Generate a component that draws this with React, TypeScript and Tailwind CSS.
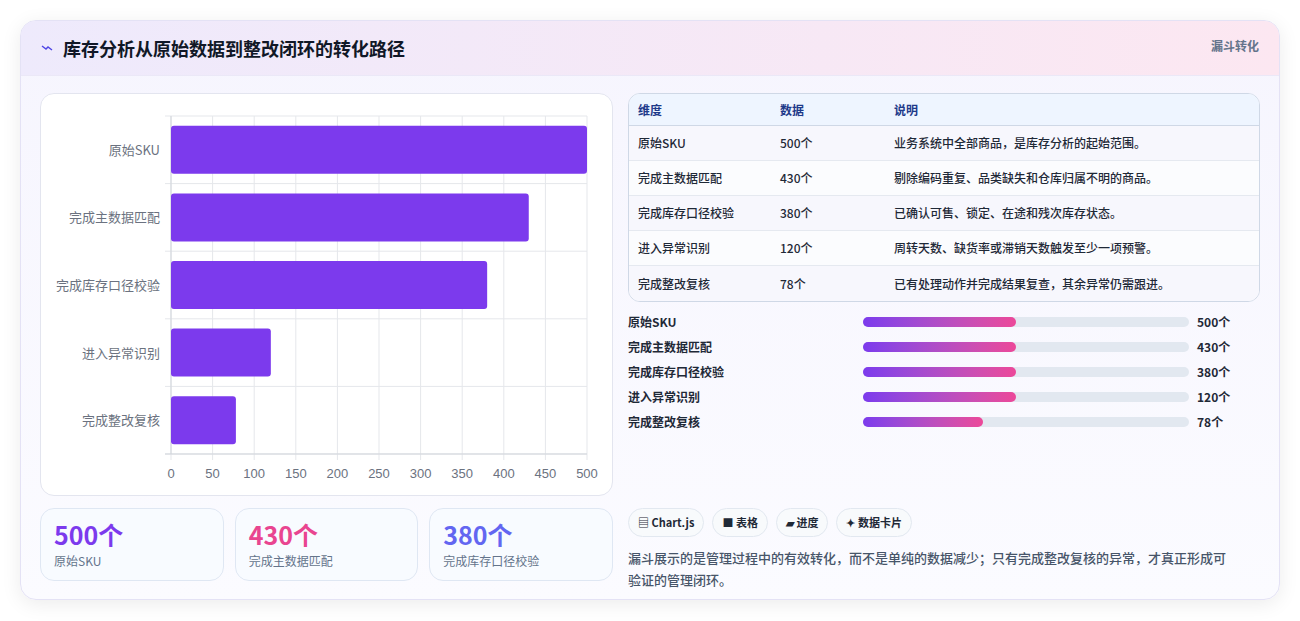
import React from "react";

const rows = [
  { n: "原始SKU", v: 500, d: "业务系统中全部商品，是库存分析的起始范围。" },
  { n: "完成主数据匹配", v: 430, d: "剔除编码重复、品类缺失和仓库归属不明的商品。" },
  { n: "完成库存口径校验", v: 380, d: "已确认可售、锁定、在途和残次库存状态。" },
  { n: "进入异常识别", v: 120, d: "周转天数、缺货率或滞销天数触发至少一项预警。" },
  { n: "完成整改复核", v: 78, d: "已有处理动作并完成结果复查，其余异常仍需跟进。" },
];

function Chart() {
  const x0 = 130, x1 = 546, y0 = 22, y1 = 360;
  const rowH = (y1 - y0) / 5;
  return (
    <svg width="572" height="402" className="block">
      {Array.from({ length: 11 }).map((_, i) => {
        const x = x0 + (i * (x1 - x0)) / 10;
        return (
          <g key={i}>
            <line x1={x} y1={y0} x2={x} y2={y1 + 6} stroke="#e5e7eb" />
            <text x={x} y={y1 + 24} textAnchor="middle" fontSize="13" fill="#6b7280" fontFamily="Liberation Sans, sans-serif">{i * 50}</text>
          </g>
        );
      })}
      {Array.from({ length: 6 }).map((_, i) => (
        <line key={i} x1={x0 - 6} y1={y0 + i * rowH} x2={x1} y2={y0 + i * rowH} stroke="#e5e7eb" />
      ))}
      <line x1={x0} y1={y0} x2={x0} y2={y1} stroke="#d1d5db" />
      <line x1={x0 - 6} y1={y1} x2={x1} y2={y1} stroke="#d1d5db" />
      {rows.map((r, i) => {
        const cy = y0 + i * rowH + rowH / 2;
        const w = (r.v / 500) * (x1 - x0);
        return (
          <g key={r.n}>
            <rect x={x0} y={cy - 24} width={w} height={48} rx="3" fill="#7c3aed" />
            <text x={x0 - 11} y={cy + 5} textAnchor="end" fontSize="13" fill="#6b7280" fontFamily="Noto Sans CJK SC, sans-serif">{r.n}</text>
          </g>
        );
      })}
    </svg>
  );
}

export default function App() {
  const font = { fontFamily: '"Noto Sans CJK SC", "Noto Sans", sans-serif' };
  return (
    <div className="w-[1300px] h-[621px] bg-white pt-[20px] px-[20px]" style={font}>
      <div className="w-[1260px] h-[580px] rounded-[16px] border border-[#e4e2f5] overflow-hidden bg-gradient-to-b from-[#f6f5fe] to-[#fbfbff] shadow-[0_4px_20px_rgba(0,0,0,0.08)]">
        <div className="h-[55px] flex items-center justify-between px-[20px] bg-gradient-to-r from-[#eeeafc] to-[#fce7f1] border-b border-[#ebe8f7]">
          <div className="flex items-center gap-[10px]">
            <svg width="12" height="8" viewBox="0 0 12 8"><path d="M1 2 L5 5 L7 3 L11 6" stroke="#4f46e5" strokeWidth="1.4" fill="none" /></svg>
            <span className="text-[18px] font-bold text-[#111827]">库存分析从原始数据到整改闭环的转化路径</span>
          </div>
          <span className="text-[12px] font-bold text-[#64748b] -mt-[4px]">漏斗转化</span>
        </div>
        <div className="flex gap-[15px] px-[19px] pt-[17px]">
          <div className="w-[573px] flex flex-col gap-[12px]">
            <div className="h-[403px] rounded-[14px] border border-[#e3e5ef] bg-white"><Chart /></div>
            <div className="flex gap-[11px]">
              {[["500个", "原始SKU", "text-[#7c3aed]"], ["430个", "完成主数据匹配", "text-[#e94590]"], ["380个", "完成库存口径校验", "text-[#6366f1]"]].map(([a, b, c]) => (
                <div key={a} className="w-[184px] h-[73px] rounded-[14px] border border-[#dfe7f3] bg-[#f8fbff] px-[13px] pt-[9px]">
                  <div className={`text-[25px] leading-[32px] font-bold ${c}`}>{a}</div>
                  <div className="text-[12px] text-[#64748b] mt-[2px]">{b}</div>
                </div>
              ))}
            </div>
          </div>
          <div className="w-[633px] flex flex-col">
            <div className="rounded-[12px] border border-[#cfd8e6] overflow-hidden bg-white text-[12px]">
              <div className="h-[32px] flex items-center bg-[#eef5ff] border-b border-[#cfd8e6] text-[#1e3a8a] font-bold">
                <div className="w-[151px] pl-[9px]">维度</div>
                <div className="w-[114px]">数据</div>
                <div>说明</div>
              </div>
              {rows.map((r, i) => (
                <div key={r.n} className={`h-[35px] flex items-center text-[#1f2937] font-medium ${i < 4 ? "border-b border-[#e5e9f0]" : ""} ${i % 2 === 1 ? "bg-[#fbfcfe]" : "bg-[#f7f7fd]"}`}>
                  <div className="w-[151px] pl-[9px]">{r.n}</div>
                  <div className="w-[114px]">{r.v}个</div>
                  <div>{r.d}</div>
                </div>
              ))}
            </div>
            <div className="flex flex-col gap-[7px] mt-[11px]">
              {rows.map((r, i) => (
                <div key={r.n} className="flex items-center h-[18px] text-[12px] font-bold text-[#1f2937]">
                  <div className="w-[235px]">{r.n}</div>
                  <div className="w-[326px] h-[10px] rounded-full bg-[#e2e8f0]">
                    <div className="h-full rounded-full bg-gradient-to-r from-[#7c3aed] to-[#ec4899]" style={{ width: i === 4 ? 120 : 153 }} />
                  </div>
                  <div className="ml-[8px]">{r.v}个</div>
                </div>
              ))}
            </div>
            <div className="flex gap-[8px] mt-[77px]">
              {["▤ Chart.js", "■ 表格", "▰ 进度", "✦ 数据卡片"].map((t) => (
                <div key={t} className="h-[29px] px-[9px] flex items-center rounded-full border border-[#e2e8f0] bg-[#f8fafc] text-[11px] font-bold text-[#1f2937]">{t}</div>
              ))}
            </div>
            <p className="mt-[10px] text-[13px] leading-[22px] text-[#475569] font-medium w-[610px]">漏斗展示的是管理过程中的有效转化，而不是单纯的数据减少；只有完成整改复核的异常，才真正形成可验证的管理闭环。</p>
          </div>
        </div>
      </div>
    </div>
  );
}
